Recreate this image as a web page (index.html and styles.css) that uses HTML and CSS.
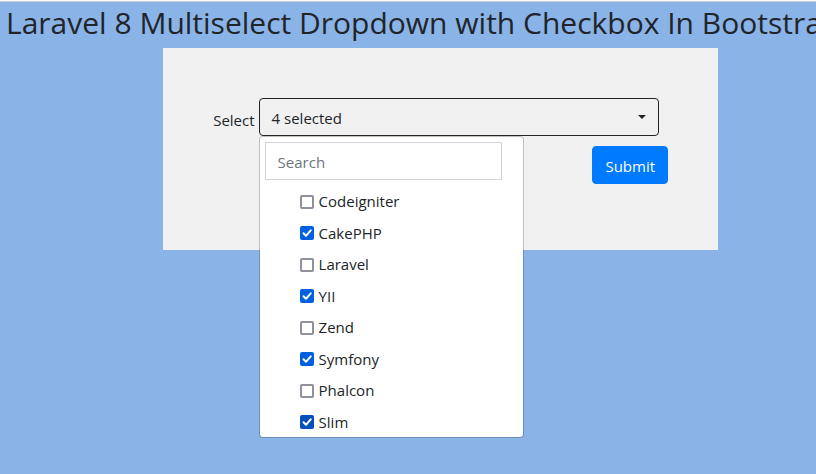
FILE: index.html
```html
<!DOCTYPE html>
<html lang="en">
<head>
<meta charset="utf-8">
<title>Multiselect Dropdown</title>
<link rel="stylesheet" href="styles.css">
</head>
<body>
<h2 class="title">Laravel 8 Multiselect Dropdown with Checkbox In Bootstrap</h2>
<form class="card">
  <div class="field">
    <label class="field-label" for="framework">Select</label>
    <div class="multiselect">
      <button type="button" class="toggle" id="framework" aria-expanded="true">
        <span>4 selected</span>
        <span class="caret"></span>
      </button>
      <div class="menu">
        <input class="search" type="text" placeholder="Search" aria-label="Search">
        <ul class="options">
          <li><label class="option"><input type="checkbox">Codeigniter</label></li>
          <li><label class="option"><input type="checkbox" checked>CakePHP</label></li>
          <li><label class="option"><input type="checkbox">Laravel</label></li>
          <li><label class="option"><input type="checkbox" checked>YII</label></li>
          <li><label class="option"><input type="checkbox">Zend</label></li>
          <li><label class="option"><input type="checkbox" checked>Symfony</label></li>
          <li><label class="option"><input type="checkbox">Phalcon</label></li>
          <li><label class="option"><input type="checkbox" class="hovered" checked>Slim</label></li>
        </ul>
      </div>
    </div>
  </div>
  <div class="actions">
    <button type="button" class="submit">Submit</button>
  </div>
</form>
</body>
</html>
```
FILE: styles.css
```css
* {
  box-sizing: border-box;
}

html {
  background: #8ab3e7;
}

body {
  min-height: 100vh;
  margin: 0;
  border-top: 1px solid #f9f9fb;
  box-shadow: inset 0 1px #ccccd0;
  color: #212529;
  font-family: "Segoe UI", "Open Sans", sans-serif;
  font-size: 15px;
  line-height: 24px;
}

button,
input {
  font: inherit;
  color: inherit;
}

.title {
  margin: 0;
  padding: 3px 0 6px 6px;
  overflow: hidden;
  font-size: 30px;
  font-weight: 400;
  line-height: 38px;
  white-space: nowrap;
}

.card {
  width: 68%;
  margin-left: 20%;
  padding: 50px 50px 66px;
  background: #f1f1f1;
}

.field {
  display: flex;
  align-items: center;
  gap: 4px;
}

.field-label {
  flex: none;
  padding-top: 5px;
}

.multiselect {
  position: relative;
  flex: 0 1 400px;
}

.toggle {
  display: flex;
  align-items: center;
  justify-content: space-between;
  width: 100%;
  padding: 7px 12px 5px;
  border: 1px solid #212529;
  border-radius: 4px;
  background: transparent;
}

.caret {
  margin-bottom: 2px;
  border-top: 4px solid;
  border-right: 4px solid transparent;
  border-left: 4px solid transparent;
}

.menu {
  position: absolute;
  top: 100%;
  left: 0;
  z-index: 1;
  width: 265px;
  padding: 5px 5px 0;
  border: 1px solid rgba(0, 0, 0, 0.2);
  border-radius: 4px;
  background: #fff;
  background-clip: padding-box;
}

.search {
  display: block;
  width: 237px;
  padding: 7px 12px 5px;
  border: 1px solid #ced4da;
  border-radius: 0;
  background: #fff;
}

.search::placeholder {
  color: #6c757d;
  opacity: 1;
}

.options {
  display: grid;
  grid-auto-rows: 1fr;
  height: 252px;
  margin: 5px 0 0;
  padding: 0 0 0 35px;
  list-style: none;
}

.option {
  display: flex;
  align-items: center;
  gap: 5px;
  padding-top: 4px;
}

.option input {
  appearance: none;
  width: 14px;
  height: 14px;
  margin: 1px 0 0;
  border: 2px solid #8f8f9d;
  border-radius: 2px;
  background: #fff;
}

.option input:checked {
  border: 0;
  background: #0060df url("data:image/svg+xml,%3Csvg xmlns='http://www.w3.org/2000/svg' viewBox='0 0 14 14'%3E%3Cpath d='M3.5 7.3 6 9.8 10.7 4.3' fill='none' stroke='white' stroke-width='2' stroke-linecap='round' stroke-linejoin='round'/%3E%3C/svg%3E");
}

.option input.hovered:checked {
  background-color: #0250bb;
}

.actions {
  display: flex;
  justify-content: flex-end;
  margin-top: 10px;
}

.submit {
  padding: 7px 12px 5px;
  border: 1px solid #007bff;
  border-radius: 4px;
  background: #007bff;
  color: #fff;
}
```
